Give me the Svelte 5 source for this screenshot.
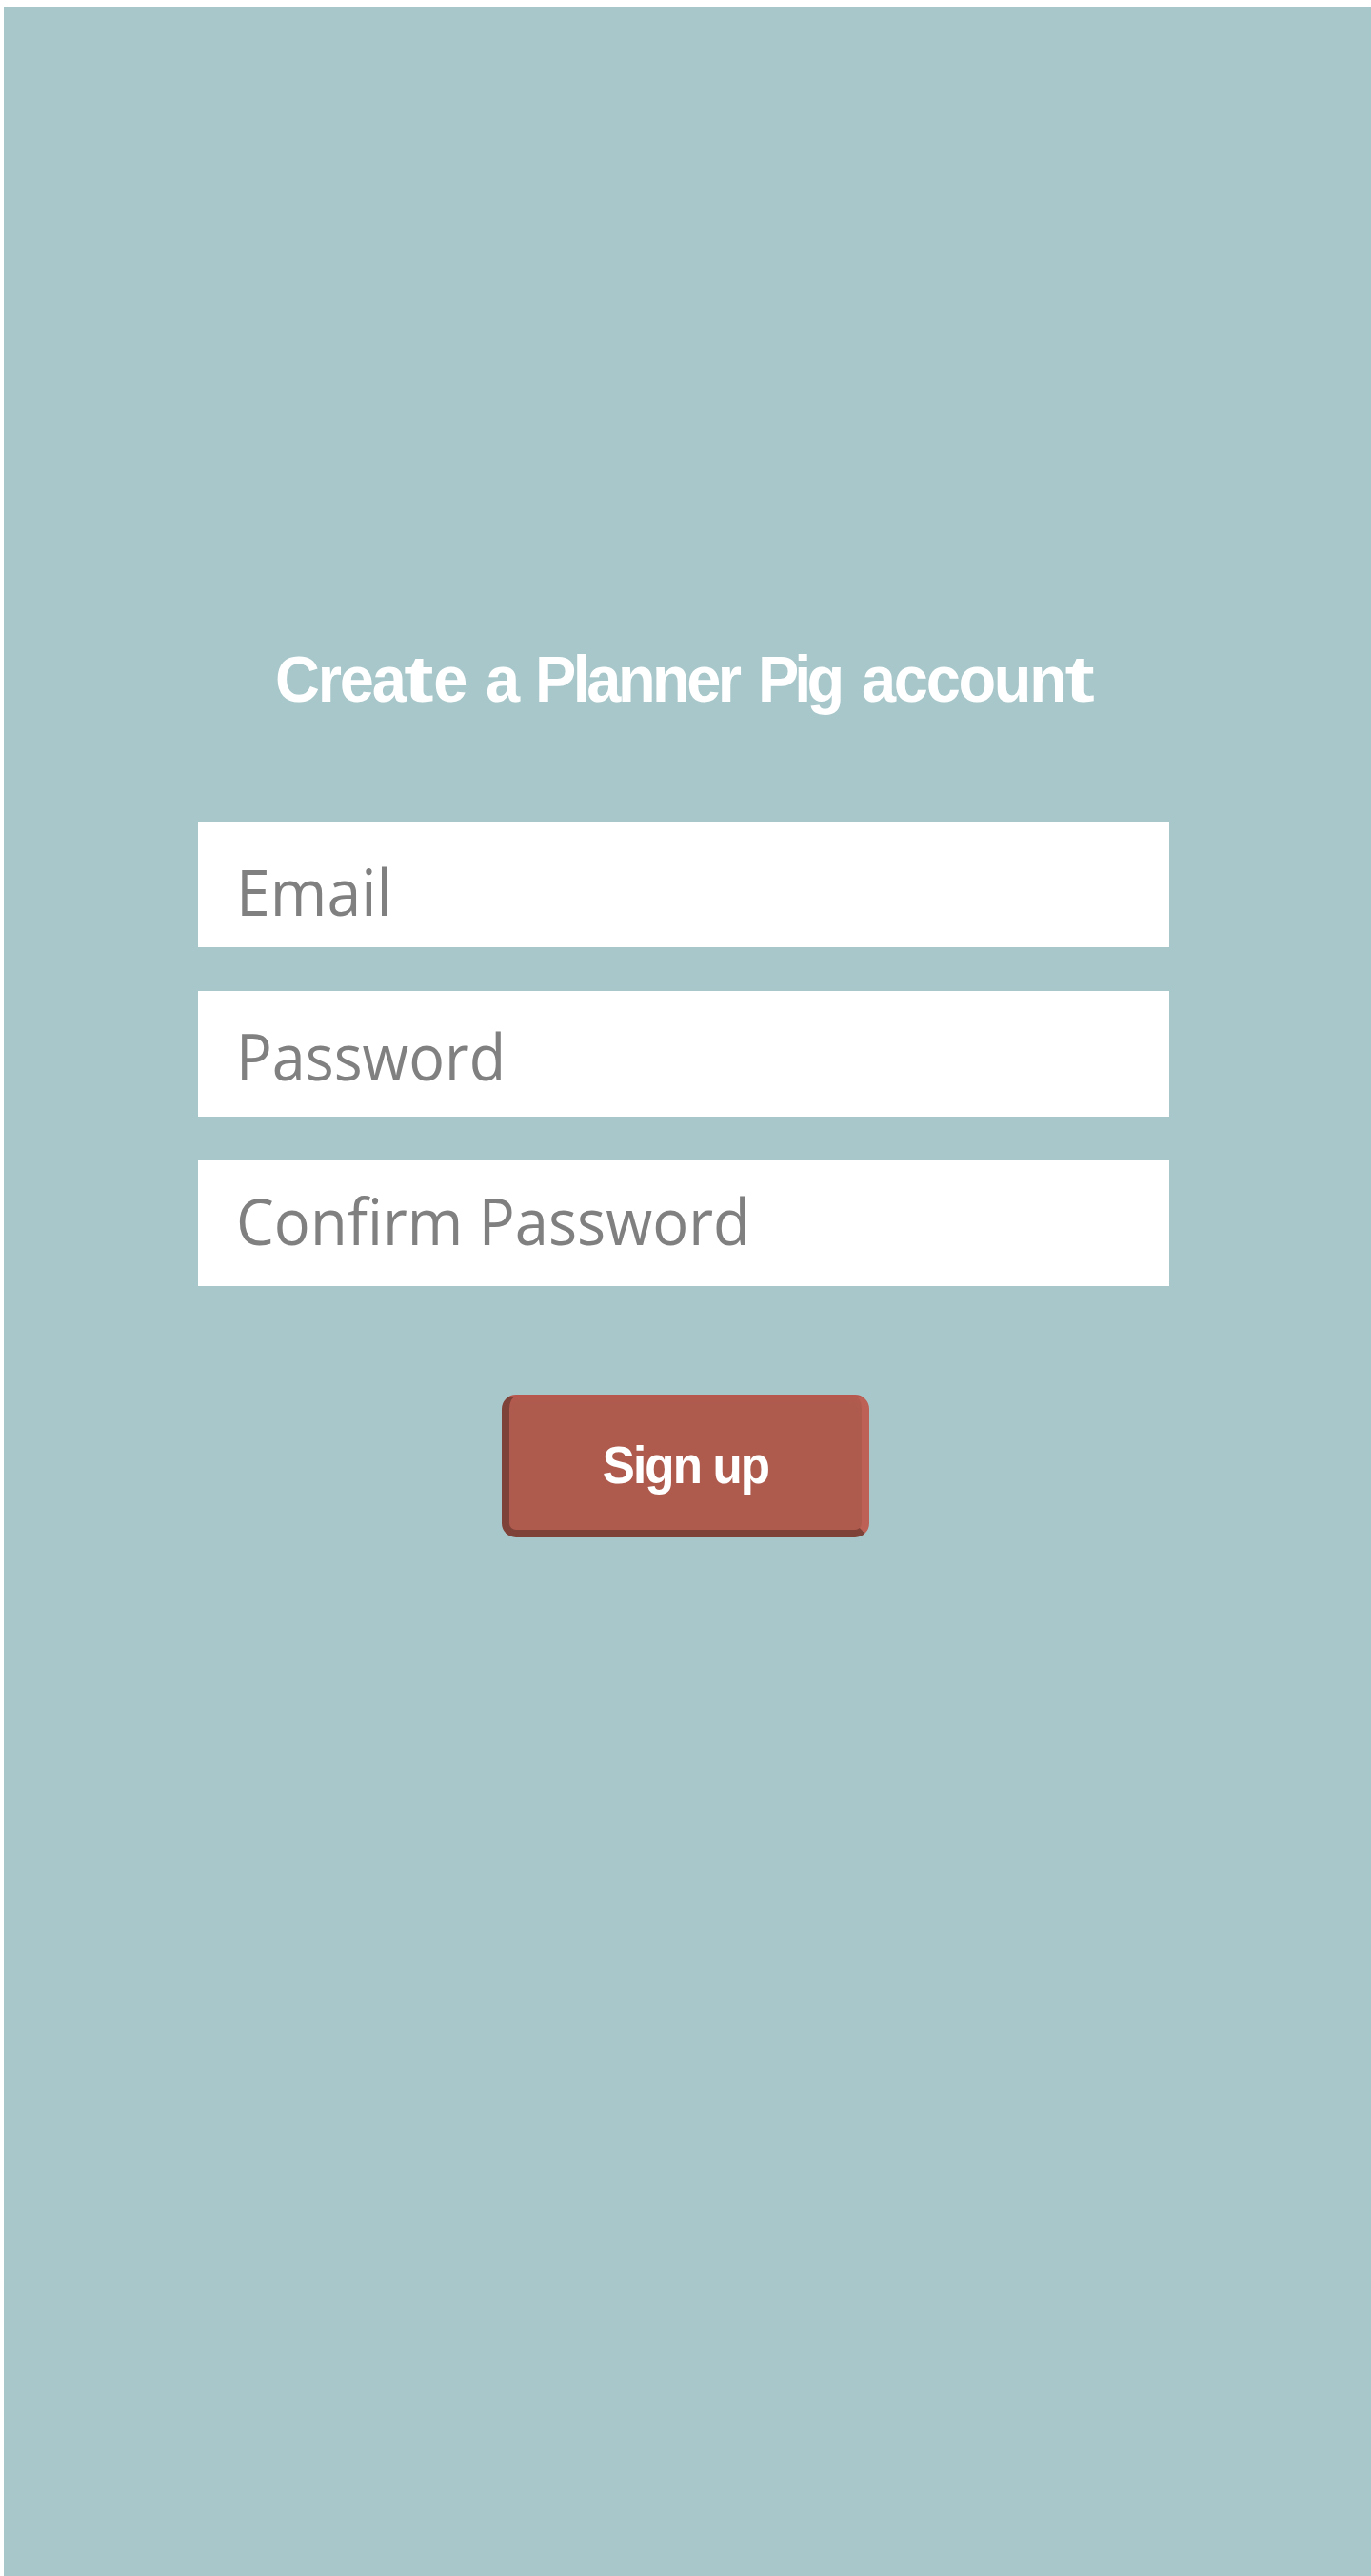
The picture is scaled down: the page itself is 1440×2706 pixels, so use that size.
<script>
  // The headline's "t" is set wider than the other letters.
  const title = [
    { parts: ['Crea', 't', 'e'], name: 'create' },
    { parts: ['a'], name: 'a' },
    { parts: ['Planner'], name: 'planner' },
    { parts: ['Pig'], name: 'pig' },
    { parts: ['accoun', 't'], name: 'account' }
  ];
  const fields = [
    { label: 'Email', name: 'email' },
    { label: 'Password', name: 'password' },
    { label: 'Confirm Password', name: 'confirm' }
  ];
</script>

<main class="page">
  <h1 class="title">
    {#each title as word}
      <span class="word {word.name}"
        >{#each word.parts as part}<span class:wide={part === 't'}>{part}</span>{/each}</span
      >
    {/each}
  </h1>
  <form class="form">
    {#each fields as field}
      <div class="field {field.name}"><span class="label">{field.label}</span></div>
    {/each}
    <button type="button" class="submit"><span class="caption">Sign up</span></button>
  </form>
</main>

<style>
  :global(body) {
    margin: 0;
    background: #fff;
  }
  .page {
    box-sizing: border-box;
    height: 2706px;
    border-top: 7px solid #fff;
    border-left: 4px solid #fff;
    background: #a8c7ca;
    background-clip: padding-box;
    padding-top: 667px;
    overflow: hidden;
  }
  .title {
    display: flex;
    margin: 0 0 0 285px;
    height: 80px;
    font: bold 69px/79px 'Liberation Sans', Arial, sans-serif;
    color: #fff;
  }
  .word {
    display: block;
    flex: none;
    white-space: nowrap;
    transform: scaleX(0.94);
    transform-origin: 0 0;
  }
  .wide {
    display: inline-block;
    transform: scaleX(1.45);
    transform-origin: 0 0;
    margin-right: 12px;
  }
  .create { width: 221px; letter-spacing: -2.3px; }
  .a { width: 52px; }
  .planner { width: 234px; letter-spacing: -3.7px; }
  .pig { width: 109px; letter-spacing: -5.2px; }
  .account { width: 270px; letter-spacing: -2.4px; }
  .form {
    display: flex;
    flex-direction: column;
    gap: 46.4px;
    width: 1020px;
    margin: 109px 0 0 204px;
  }
  .field {
    box-sizing: border-box;
    height: 131.6px;
    padding-left: 40px;
    background: #fff;
    color: #808080;
    font: 68px/80px 'Open Sans', 'Noto Sans', sans-serif;
    white-space: nowrap;
  }
  .email { padding-top: 33px; }
  .password { padding-top: 28px; }
  .confirm { padding-top: 23px; }
  .label {
    display: inline-block;
    transform: scaleX(0.93);
    transform-origin: 0 0;
  }
  .email .label { transform: scaleX(0.947); }
  .password .label { transform: scaleX(0.924); }
  .submit {
    box-sizing: border-box;
    width: 386px;
    height: 150px;
    margin: 68px 0 0 319px;
    padding: 4px 0 0;
    border: solid;
    border-width: 2px 8px 8px;
    border-color: #b8564e #bd6055 #7f4238 #7f4238;
    border-radius: 15px;
    background: #ae5b4e;
    box-shadow: inset 0 5px 6px -2px #b55b50;
    color: #fff;
    font: bold 55px/64px 'Liberation Sans', Arial, sans-serif;
    letter-spacing: -2px;
  }
  .caption {
    display: block;
    transform: scaleX(0.93);
  }
</style>
